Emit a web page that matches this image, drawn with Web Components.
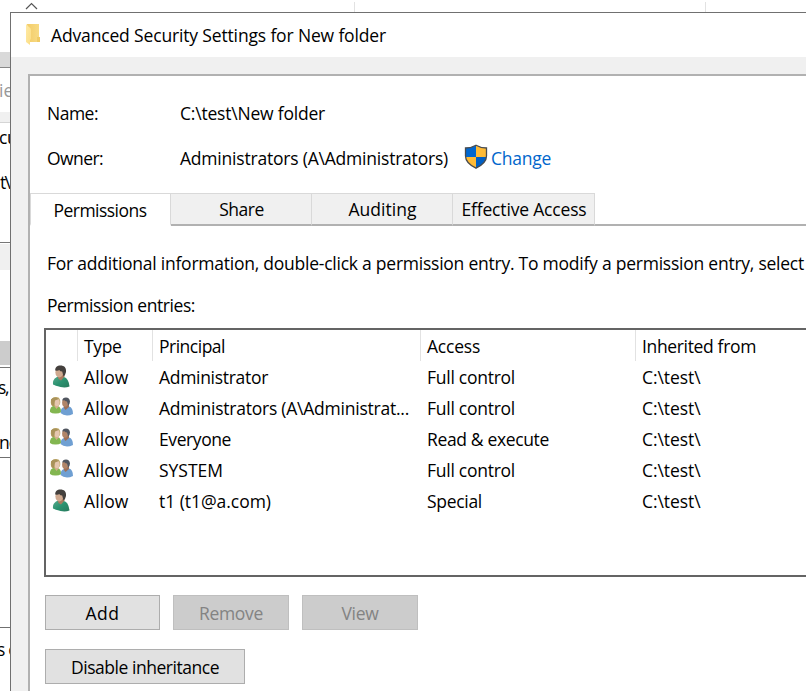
<!DOCTYPE html>
<html lang="en">
<head>
<meta charset="utf-8">
<title>Advanced Security Settings for New folder</title>
<style>
html,body{margin:0;height:100%;overflow:hidden;background:#fff}
body{font:17.5px/24px "Open Sans","Noto Sans",sans-serif;color:#000}
</style>
</head>
<body>
<security-app></security-app>
<script>
const define=(name,html,init)=>{
  const t=document.createElement('template');t.innerHTML=html;
  customElements.define(name,class extends HTMLElement{
    constructor(){super();this.attachShadow({mode:'open'}).append(t.content.cloneNode(true));}
    connectedCallback(){if(init)init.call(this,this.shadowRoot);}
  });
};

/* Single-line label whose tracking is adjusted to a given width. */
define('ui-text',`<style>:host{display:block;white-space:pre;height:24px;width:max-content;flex:none}span{display:inline-block}</style><span></span>`,function(r){
  const s=r.querySelector('span'),w=+this.getAttribute('w');
  s.textContent=this.getAttribute('label');
  if(w){
    const n=s.textContent.length;
    s.style.letterSpacing=((w-s.getBoundingClientRect().width)/n)+'px';
  }
});

define('folder-icon',`<style>:host{display:block;width:16px;height:22px}svg{display:block}</style>
<svg width="16" height="22" viewBox="0 0 16 22"><defs><linearGradient id="a" x1="0" x2="1"><stop offset="0" stop-color="#f3cc68"/><stop offset="1" stop-color="#f8dc86"/></linearGradient><linearGradient id="b" x1="0" y1="0" x2="1" y2="1"><stop offset="0" stop-color="#ffeaa6"/><stop offset="1" stop-color="#fbdd83"/></linearGradient></defs>
<path d="M1 0h12v13l1 1v4H3z" fill="url(#a)"/><path d="M11 13h3v5h-3z" fill="#f0cb66"/><path d="M0 0l3 3q2 1 2 3v9l-1 1v5l-4-3z" fill="url(#b)"/></svg>`);

define('shield-icon',`<style>:host{display:block;width:24px;height:26px}svg{display:block}</style>
<svg width="24" height="26" viewBox="0 0 24 26"><defs><clipPath id="c"><path d="M12 1.2C9 3 5.500 4 1.500 4v8c0 6 5 9.500 10.500 12.200C17.500 21.500 22.500 18 22.500 12V4C18.500 4 15 3 12 1.200z"/></clipPath></defs>
<g clip-path="url(#c)"><path fill="#0067d0" d="M0 0h12v13H0z"/><path fill="#ffbb36" d="M12 0h12v13H12z"/><path fill="#ffbb36" d="M0 13h12v13H0z"/><path fill="#005fc4" d="M12 13h12v13H12z"/></g><path d="M12 1.200C9 3 5.500 4 1.500 4v8c0 6 5 9.500 10.500 12.200C17.500 21.500 22.500 18 22.500 12V4C18.500 4 15 3 12 1.200z" fill="none" stroke="#484b4e" stroke-width="1.300"/></svg>`);

define('user-icon',`<style>:host{display:block;width:24px;height:24px}svg{display:block}</style>
<svg width="24" height="24" viewBox="0 0 24 24"><defs><linearGradient id="g" x1="0" x2="1" y2="1"><stop offset="0" stop-color="#58a98c"/><stop offset=".5" stop-color="#2a9270"/><stop offset="1" stop-color="#277a5c"/></linearGradient></defs>
<path d="M3 19.500C2.500 14.500 5 13 8 11.500L14 12q4.500 1 5.500 9.500-4 1.500-9 .5Q5 20.500 3 19.500z" fill="url(#g)"/>
<path d="M7 9l1.500 5 2.500 1.500 3.500-4V8z" fill="#a97a5f"/><ellipse cx="9.300" cy="7.500" rx="3.900" ry="5" fill="#cfa98f"/><path d="M5.200 5.500C5.200 2 7 .5 10.500.5S16.500 2.500 16 7q-.5 3-2.500 4.500l-1.300-5q-2 0-3-1.500-1 1-4 .5z" fill="#44403d"/></svg>`);

define('group-icon',`<style>:host{display:block;width:24px;height:24px}svg{display:block}</style>
<svg width="24" height="24" viewBox="0 0 24 24"><path d="M10.500 17q0-5 3.500-6l5-.5q4 1 4 7.500-3 1.500-6 1.500-4-.2-6.500-2.500z" fill="#6f9fd2"/><path d="M13.500 9l.5 3 1.500 2 3.500-3V8z" fill="#9d7057"/><ellipse cx="15" cy="6.800" rx="2.900" ry="4" fill="#b18568"/><path d="M12.300 4.500Q12.500 1.500 16 1.500T20 5.500q0 2.500-2 4L17 5.500Q15.500 5.500 14.500 4.200z" fill="#50555e"/>
<path d="M0 16q-.5-4.500 3-6l5 .5q3 0 3 5.500-2 1.800-6 1.500-3 0-5-1.500z" fill="#83b650"/><path d="M1 3.500Q4 0 8.500 1.500q2.500 2 1.500 6.500l-2 2.500-6-.5Q0 6.500 1 3.500z" fill="#bda767"/><path d="M4.500 8l.5 3 1.500 2 2.500-3V8z" fill="#d4ad8b"/><ellipse cx="7" cy="6.300" rx="2.700" ry="3.900" fill="#e5c7b0"/><path d="M1 3.500Q4 0 9 3L5 4.500 4 10 1.500 9z" fill="#a9925a"/></svg>`);

define('ui-button',`<style>:host{display:flex;box-sizing:border-box;height:35px;border:1px solid #adadad;background:#e1e1e1;justify-content:center;padding-top:5px}:host([disabled]){background:#ccc;border-color:#bfbfbf;color:#838383}</style><slot></slot>`);

define('ui-tab',`<style>:host{display:flex;box-sizing:border-box;height:33px;width:141px;border:1px solid #d9d9d9;border-left:0;border-bottom:2px solid #b1b1b1;background:#f0f0f0;padding-top:3px;padding-left:1px;justify-content:center}:host([active]){background:#fff;border-left:1px solid #d9d9d9;border-bottom-color:#fff;padding:4px 1px 0 0}</style><slot></slot>`);

define('entry-row',`<style>:host{display:grid;grid-template-columns:38px 75px 268px 215px 1fr;height:31px}.i{padding:4px 0 0 4px}.t{padding-top:4px}</style>
<div class="i"></div><div class="t a"></div><div class="t b"></div><div class="t c"></div><div class="t d"></div>`,function(r){
  const put=(q,l,w)=>{const e=document.createElement('ui-text');e.setAttribute('label',l);e.setAttribute('w',w);r.querySelector(q).append(e);};
  r.querySelector('.i').append(document.createElement(this.getAttribute('icon')));
  const [n,nw,a,aw]=this.getAttribute('data').split('|');
  put('.a','Allow',44.5);put('.b',n,nw);put('.c',a,aw);put('.d','C:\\test\\',58.5);
});

define('entry-table',`<style>:host{display:block;box-sizing:border-box;height:249px;width:790px;border:2px solid #646464;background:#fff}
.h{display:grid;grid-template-columns:32px 75px 268px 215px 1fr;height:31px}.h div{border-right:1px solid #e2e2e2;padding:4px 0 0 6px;box-sizing:border-box}.h div:last-child{border:0}</style>
<div class="h"><div></div><div><ui-text label="Type" w="37.500"></ui-text></div><div><ui-text label="Principal" w="66"></ui-text></div><div><ui-text label="Access" w="53"></ui-text></div><div><ui-text label="Inherited from" w="114"></ui-text></div></div>
<entry-row icon="user-icon" data="Administrator|109|Full control|88"></entry-row>
<entry-row icon="group-icon" data="Administrators (A\\Administrat...|250|Full control|88"></entry-row>
<entry-row icon="group-icon" data="Everyone|72|Read &amp; execute|122"></entry-row>
<entry-row icon="group-icon" data="SYSTEM|64|Full control|88"></entry-row>
<entry-row icon="user-icon" data="t1 (t1@a.com)|112|Special|55"></entry-row>`);

define('settings-panel',`<style>:host{display:block;box-sizing:border-box;width:800px;height:640px;border:2px solid #b1b1b1;background:#fff}
.f{display:flex;padding-left:17px;height:24px}.k{width:133px}.n{padding-top:25px}.o{padding-top:21px}shield-icon{margin:-2px 3px 0 16px}
.tabs{display:flex;margin-top:23px;height:33px}.tabs i{flex:1;box-sizing:border-box;border-bottom:2px solid #b1b1b1;height:33px}
.p{padding-left:17px}entry-table{margin:11px 0 18px 14px}.b{display:flex;gap:13px;padding-left:15px}.b+.b{margin-top:19px}</style>
<div class="f n"><div class="k"><ui-text label="Name:" w="51"></ui-text></div><ui-text label="C:\\test\\New folder" w="145"></ui-text></div>
<div class="f o"><div class="k"><ui-text label="Owner:" w="56"></ui-text></div><ui-text label="Administrators (A\\Administrators)" w="268"></ui-text><shield-icon></shield-icon><ui-text style="color:#0066cc" label="Change" w="60"></ui-text></div>
<div class="tabs"><ui-tab active><ui-text label="Permissions" w="93"></ui-text></ui-tab><ui-tab><ui-text label="Share" w="44.500"></ui-text></ui-tab><ui-tab><ui-text label="Auditing" w="68"></ui-text></ui-tab><ui-tab style="width:142px"><ui-text label="Effective Access" w="125"></ui-text></ui-tab><i></i></div>
<div class="p" style="padding-top:25px"><ui-text label="For additional information, double-click a permission entry. To modify a permission entry, select" w="757"></ui-text></div>
<div class="p" style="padding-top:18px"><ui-text label="Permission entries:" w="148"></ui-text></div>
<entry-table></entry-table>
<div class="b"><ui-button style="width:115px"><ui-text label="Add" w="34"></ui-text></ui-button><ui-button disabled style="width:116px"><ui-text label="Remove" w="64"></ui-text></ui-button><ui-button disabled style="width:116px"><ui-text label="View" w="37"></ui-text></ui-button></div>
<div class="b"><ui-button style="width:200px"><ui-text label="Disable inheritance" w="148"></ui-text></ui-button></div>`);

define('settings-dialog',`<style>:host{display:block;box-sizing:border-box;width:900px;height:700px;border:1px solid #707070;border-right:0;background:#f0f0f0;overflow:hidden}
.t{display:flex;height:44px;background:#fff;padding-left:15px;box-sizing:border-box}folder-icon{margin:11px 9px 0 0}.t ui-text{margin-top:10px}settings-panel{margin:17px 0 0 17px}</style>
<div class="t"><folder-icon></folder-icon><ui-text label="Advanced Security Settings for New folder" w="335"></ui-text></div><settings-panel></settings-panel>`);

/* Parts of the windows stacked behind the dialog. */
define('back-windows',`<style>:host{display:block;position:absolute;inset:0;overflow:hidden;background:#fff}
b,u,ui-text,svg{position:absolute;left:0}b{width:11px}u{width:1px;background:#e2e2e2;top:2px;height:10px}</style>
<svg style="left:25px;top:2px" width="13" height="8"><path d="M1 7l5.500-5.500L12 7" fill="none" stroke="#555" stroke-width="1.200"/></svg>
<u style="left:354px"></u><u style="left:705px"></u>
<b style="top:52px;height:15px;background:#d9d9d9"></b><b style="top:67px;height:1px;background:#888"></b>
<b style="top:112px;height:10px;background:#f0f0f0"></b><b style="top:122px;height:1px;background:#d5d5d5"></b>
<b style="top:242px;height:1px;background:#777"></b><b style="top:244px;height:26px;background:#f0f0f0"></b>
<b style="top:341px;height:24px;background:#ccc"></b><b style="top:367px;height:1px;background:#777"></b>
<b style="top:457px;height:1px;background:#707070"></b><b style="top:627px;height:1px;background:#707070"></b>
<ui-text style="top:78px;left:-1px;color:#999" label="ie"></ui-text><ui-text style="top:125px;left:-1px;letter-spacing:-.5px" label="cu"></ui-text><ui-text style="top:170px" label="t\\N" w="21"></ui-text>
<ui-text style="top:375px;left:-2px" label="s," w="10"></ui-text><ui-text style="top:430px;left:-1px" label="nc" w="17"></ui-text><ui-text style="top:637px;left:-3px" label="s c" w="19"></ui-text>`);

define('security-app',`<style>:host{display:block;position:relative;width:806px;height:691px;overflow:hidden}settings-dialog{position:absolute;left:10px;top:12px}</style><back-windows></back-windows><settings-dialog></settings-dialog>`);
</script>
</body>
</html>
